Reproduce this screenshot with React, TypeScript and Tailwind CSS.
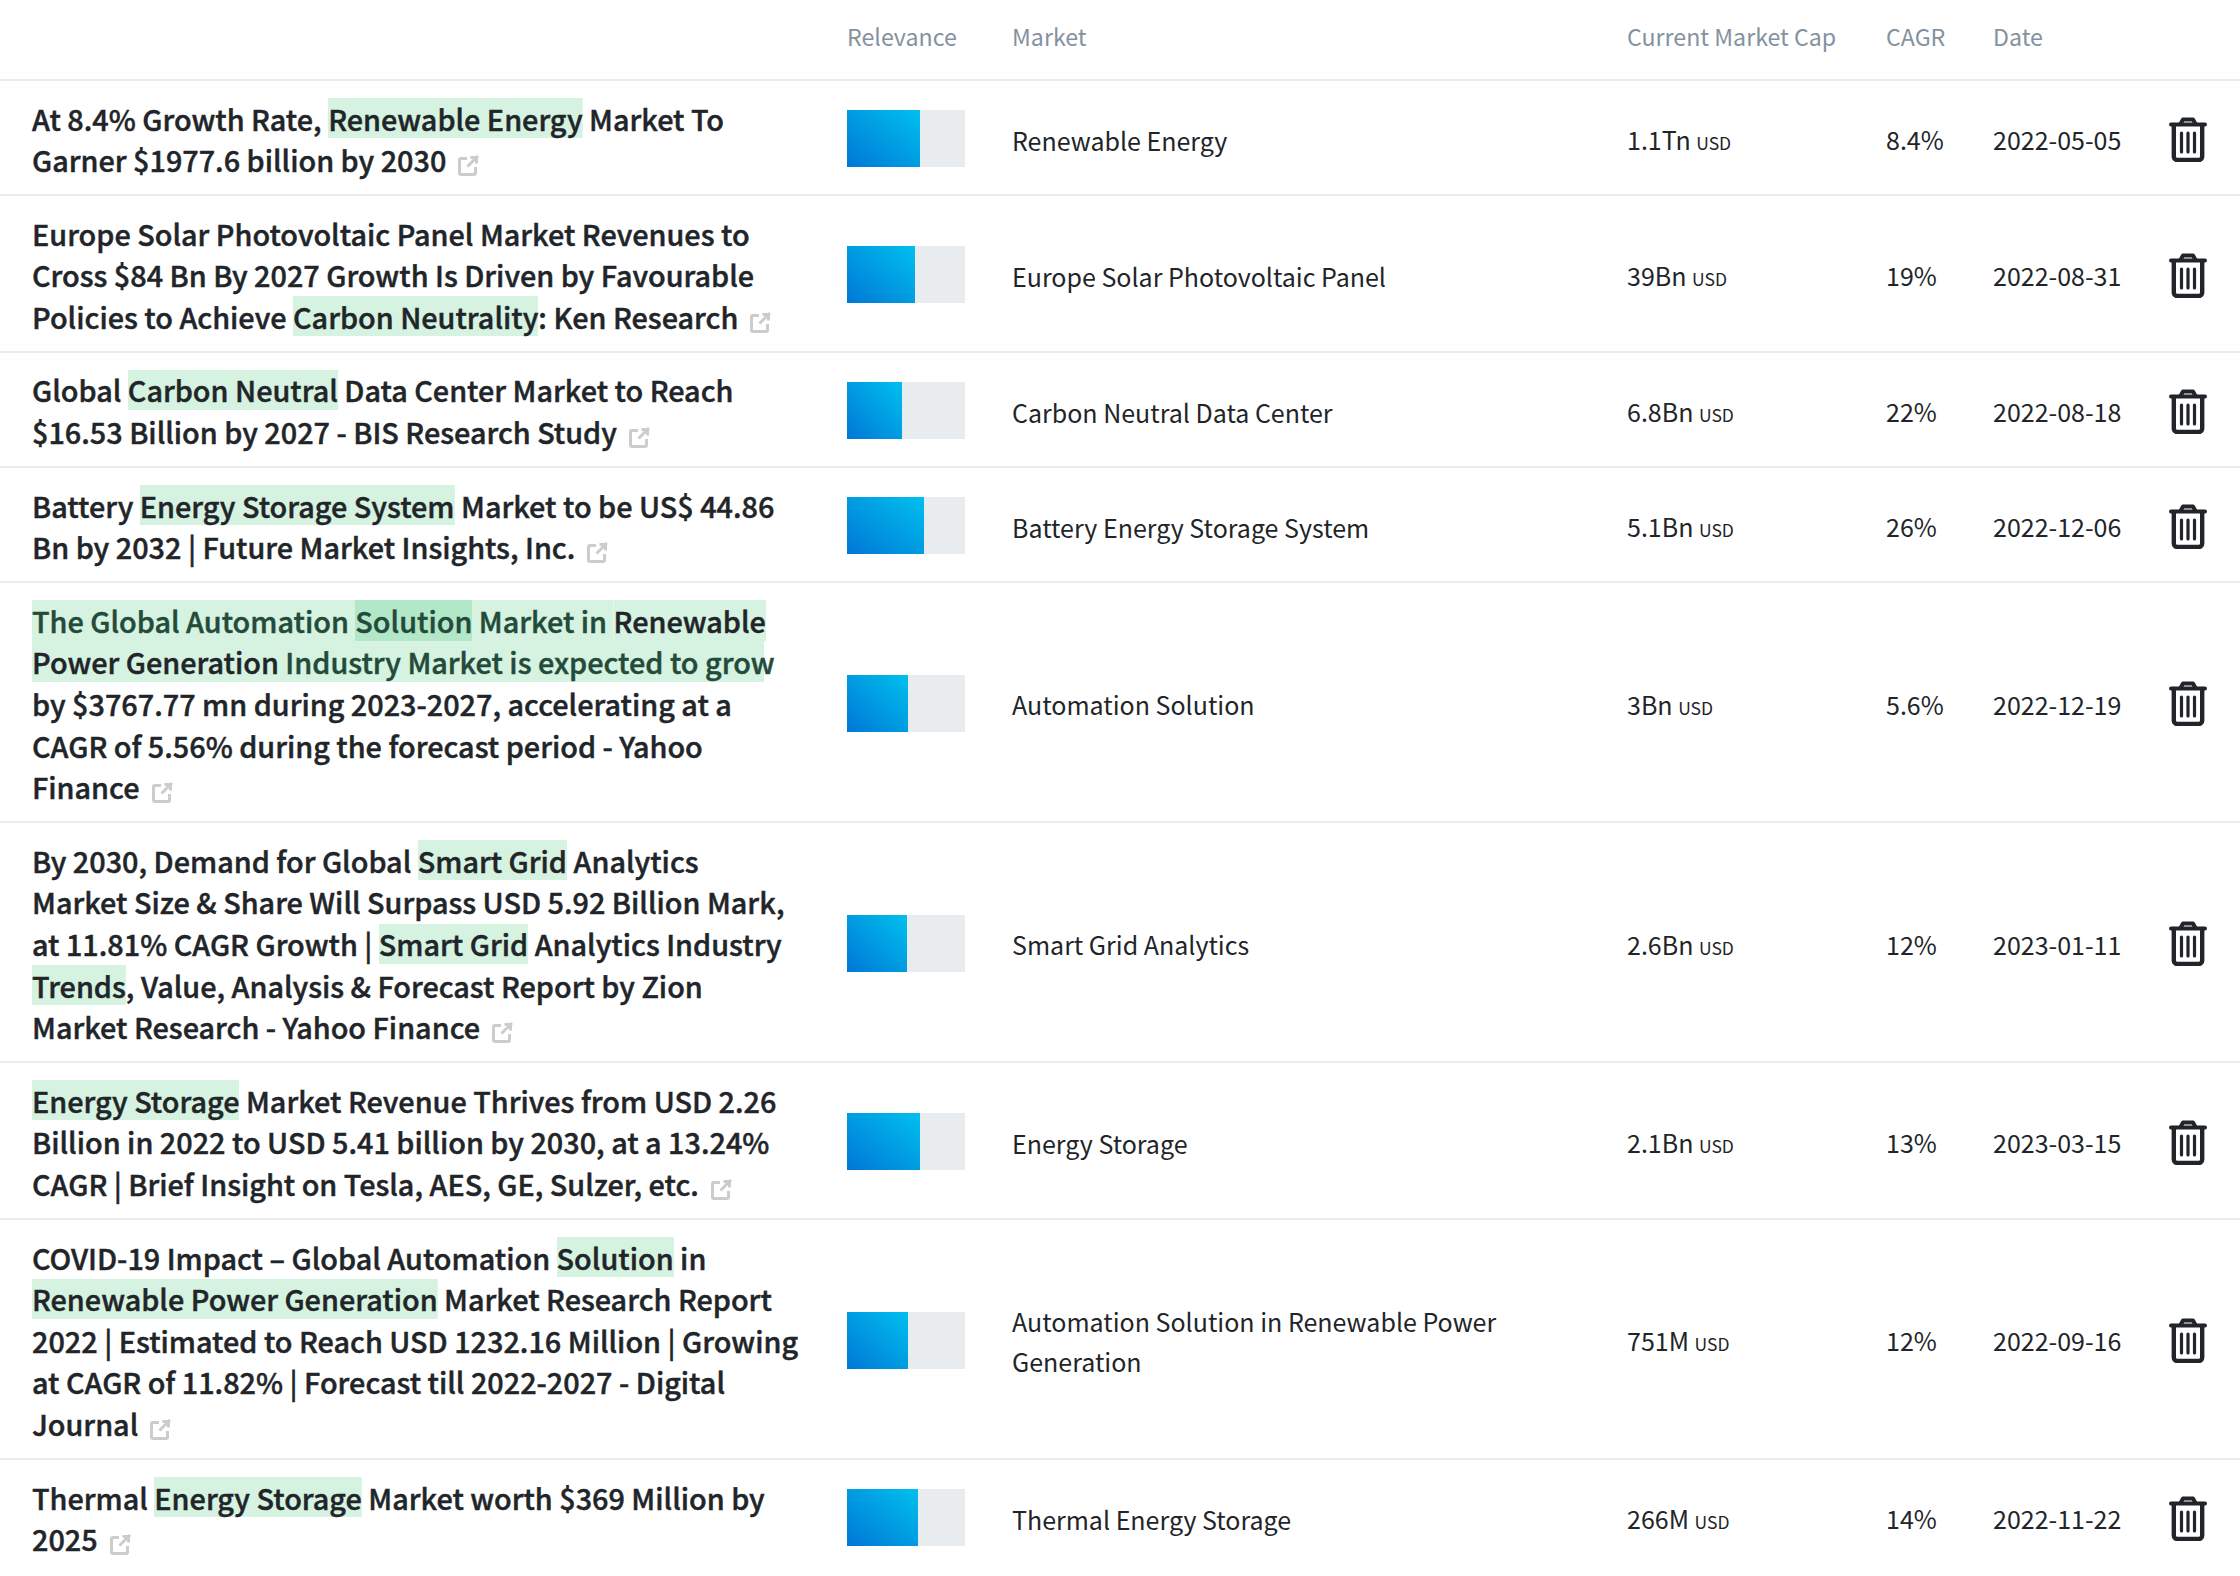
const F = "[font-family:'Noto_Sans_CJK_SC','Noto_Sans',sans-serif]";

type Seg = string | { h: string; d?: boolean; s?: boolean; c?: boolean; p?: boolean };
type Row = { t: Seg[]; w: number; m: string; c: string; u: string; g: string; d: string };

const rows: Row[] = [
  { t: ["At 8.4% Growth Rate, ", { h: "Renewable Energy" }, " Market To Garner $1977.6 billion by 2030"], w: 62, m: "Renewable Energy", c: "1.1Tn", u: "USD", g: "8.4%", d: "2022-05-05" },
  { t: ["Europe Solar Photovoltaic Panel Market Revenues to Cross $84 Bn By 2027 Growth Is Driven by Favourable Policies to Achieve ", { h: "Carbon Neutrality" }, ": Ken Research"], w: 58, m: "Europe Solar Photovoltaic Panel", c: "39Bn", u: "USD", g: "19%", d: "2022-08-31" },
  { t: ["Global ", { h: "Carbon Neutral" }, " Data Center Market to Reach $16.53 Billion by 2027 - BIS Research Study"], w: 47, m: "Carbon Neutral Data Center", c: "6.8Bn", u: "USD", g: "22%", d: "2022-08-18" },
  { t: ["Battery ", { h: "Energy Storage System" }, " Market to be US$ 44.86 Bn by 2032 | Future Market Insights, Inc."], w: 65, m: "Battery Energy Storage System", c: "5.1Bn", u: "USD", g: "26%", d: "2022-12-06" },
  { t: [{ h: "The Global Automation ", d: true }, { h: "Solution", s: true }, { h: " Market in ", d: true }, { h: "Renewable Power Generation", c: true }, { h: " Industry Market is expected to gro", d: true }, { h: "w", p: true }, " by $3767.77 mn during 2023-2027, accelerating at a CAGR of 5.56% during the forecast period - Yahoo Finance"], w: 52, m: "Automation Solution", c: "3Bn", u: "USD", g: "5.6%", d: "2022-12-19" },
  { t: ["By 2030, Demand for Global ", { h: "Smart Grid" }, " Analytics Market Size & Share Will Surpass USD 5.92 Billion Mark, at 11.81% CAGR Growth | ", { h: "Smart Grid" }, " Analytics Industry ", { h: "Trends" }, ", Value, Analysis & Forecast Report by Zion Market Research - Yahoo Finance"], w: 51, m: "Smart Grid Analytics", c: "2.6Bn", u: "USD", g: "12%", d: "2023-01-11" },
  { t: [{ h: "Energy Storage" }, " Market Revenue Thrives from USD 2.26 Billion in 2022 to USD 5.41 billion by 2030, at a 13.24% CAGR | Brief Insight on Tesla, AES, GE, Sulzer, etc."], w: 62, m: "Energy Storage", c: "2.1Bn", u: "USD", g: "13%", d: "2023-03-15" },
  { t: ["COVID-19 Impact – Global Automation ", { h: "Solution" }, " in ", { h: "Renewable Power Generation" }, " Market Research Report 2022 | Estimated to Reach USD 1232.16 Million | Growing at CAGR of 11.82% | Forecast till 2022-2027 - Digital Journal"], w: 52, m: "Automation Solution in Renewable Power Generation", c: "751M", u: "USD", g: "12%", d: "2022-09-16" },
  { t: ["Thermal ", { h: "Energy Storage" }, " Market worth $369 Million by 2025"], w: 60, m: "Thermal Energy Storage", c: "266M", u: "USD", g: "14%", d: "2022-11-22" },
];

function Ext() {
  return (
    <svg viewBox="0 0 21 21" className="inline-block w-[21px] h-[21px] ml-[12px] align-[-4px]" fill="none" stroke="#cccccc" strokeWidth="3" strokeLinejoin="round">
      <path d="M9 3.500H3a1.500 1.500 0 0 0-1.500 1.500v13A1.500 1.500 0 0 0 3 19.500h13a1.500 1.500 0 0 0 1.500-1.500v-6" />
      <path d="M20 1L9.500 11.500" />
      <path d="M12.500 2.500H18.500V8.500" />
    </svg>
  );
}

function Trash() {
  return (
    <svg viewBox="0 0 38 45" className="w-[38px] h-[45px] mt-[3px]" fill="none" stroke="#212529" strokeLinecap="round" strokeLinejoin="round">
      <path strokeWidth="4" d="M11.500 7l2.500-4.500h10L26.500 7" />
      <path strokeWidth="4" d="M2 7.500H36" />
      <path strokeWidth="4.400" d="M4.800 8v31.500a3.500 3.500 0 0 0 3.500 3.500h21.400a3.500 3.500 0 0 0 3.500-3.500V8" />
      <path strokeWidth="3.200" d="M12.500 16v19M19 16v19M25.500 16v19" />
    </svg>
  );
}

function Title({ t }: { t: Seg[] }) {
  return (
    <p className="text-[28.8px] leading-[41.6px] font-medium text-[#212529] [-webkit-text-stroke:0.45px]">
      {t.map((s, i) =>
        typeof s === "string" ? (
          <span key={i}>{s}</span>
        ) : s.p ? (
          <span key={i} className="bg-no-repeat bg-left bg-[length:55%_41.6px] bg-[linear-gradient(#d5f3e0,#d5f3e0)] text-[#234a3a]">
            {s.h}
          </span>
        ) : (
          <span
            key={i}
            className={`bg-no-repeat bg-center ${
              s.s
                ? "bg-[length:100%_41.6px] bg-[linear-gradient(#b2e8c8,#b2e8c8)] text-[#234a3a]"
                : s.d
                ? "bg-[length:100%_41.6px] bg-[linear-gradient(#d5f3e0,#d5f3e0)] text-[#234a3a]"
                : s.c
                ? "bg-[length:100%_41.6px] bg-[linear-gradient(#d5f3e0,#d5f3e0)]"
                : "bg-[length:100%_40px] bg-[linear-gradient(#d5f3e0,#d5f3e0)]"
            }`}
          >
            {s.h}
          </span>
        )
      )}
      <Ext />
    </p>
  );
}

export default function App() {
  return (
    <div className={`w-[2240px] h-[1576px] overflow-hidden bg-white ${F}`}>
      <div className="flex items-center h-[81px] pb-[6px] border-b-2 border-[#e9ecef] text-[23.2px] text-[#8492a0]">
        <div className="w-[847px]" />
        <div className="w-[165px]">Relevance</div>
        <div className="w-[615px]">Market</div>
        <div className="w-[259px]">Current Market Cap</div>
        <div className="w-[107px]">CAGR</div>
        <div>Date</div>
      </div>
      {rows.map((r, i) => (
        <div key={i} className="flex items-center border-b-2 border-[#e9ecef] last:border-b-0 text-[#212529]">
          <div className="w-[847px] pl-[32px] pr-[48px] pt-[16.500px] pb-[13.500px]">
            <Title t={r.t} />
          </div>
          <div className="w-[165px] pt-[2px]">
            <div className="w-[118px] h-[57px] bg-[#e9ecef]">
              <div
                className="h-full bg-[linear-gradient(to_top_right,#0077d6,#00c0ee)]"
                style={{ width: `${r.w}%` }}
              />
            </div>
          </div>
          <div className="w-[615px] pr-[81px] pt-[4px] text-[25px] leading-[40px]">{r.m}</div>
          <div className="w-[259px] pt-[4px] text-[25px]">
            {r.c} <span className="text-[17.500px]">{r.u}</span>
          </div>
          <div className="w-[107px] pt-[4px] text-[25px]">{r.g}</div>
          <div className="w-[176px] pt-[4px] text-[25px]">{r.d}</div>
          <Trash />
        </div>
      ))}
    </div>
  );
}
